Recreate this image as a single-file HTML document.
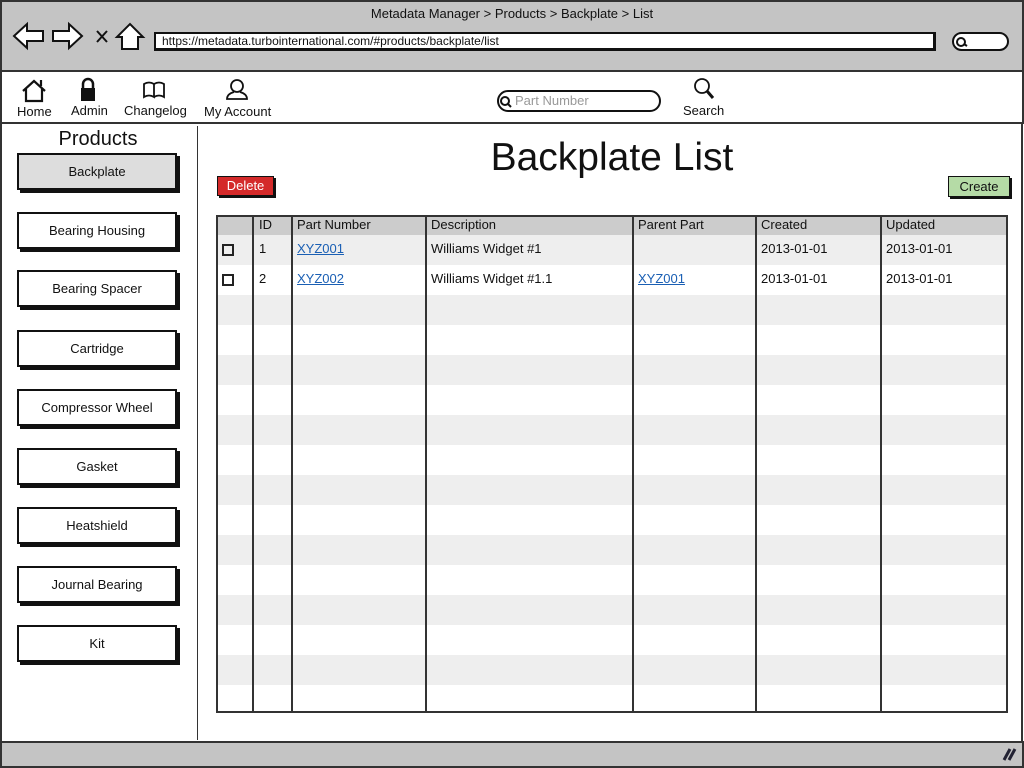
<!DOCTYPE html>
<html><head><meta charset="utf-8"><style>
*{margin:0;padding:0;box-sizing:border-box}
body{width:1024px;height:768px;position:relative;background:#fff;font-family:"Liberation Sans",sans-serif;color:#111;overflow:hidden;font-size:13px}
.a{position:absolute}
.btn{position:absolute;left:17px;width:160px;height:37px;border:2px solid #111;background:#fff;box-shadow:3px 3px 0 #111;text-align:center;line-height:33px;font-size:13px}
.t{position:absolute;font-size:13px}
.lnk{color:#1a5fb4;text-decoration:underline}
.vl{position:absolute;top:216px;width:2px;height:496px;background:#333}
</style></head><body>
<!-- browser chrome -->
<div class="a" style="left:0;top:0;width:1024px;height:72px;background:#c4c4c4;border:2px solid #333"></div>
<div class="a" style="left:0;top:6px;width:1024px;text-align:center;font-size:13px">Metadata Manager &gt; Products &gt; Backplate &gt; List</div>
<svg class="a" style="left:10px;top:21px" width="140" height="32" viewBox="0 0 140 32">
<path d="M4 15 L17 3 V10 H33 V20 H17 V27 Z" fill="#fff" stroke="#111" stroke-width="2"/>
<path d="M72 15 L59 3 V10 H43 V20 H59 V27 Z" fill="#fff" stroke="#111" stroke-width="2"/>
<path d="M87 10 L97 21 M97 10 L87 21" stroke="#111" stroke-width="2"/>
<path d="M107 16 L120 3 L133 16 H128 V28 H112 V16 Z" fill="#fff" stroke="#111" stroke-width="2"/>
</svg>
<div class="a" style="left:154px;top:32px;width:782px;height:19px;background:#fff;border:2px solid #111;border-right-width:3px;border-bottom-width:3px;font-size:12px;padding-left:6px;line-height:14px">https://metadata.turbointernational.com/#products/backplate/list</div>
<div class="a" style="left:952px;top:32px;width:57px;height:19px;background:#fff;border:2px solid #111;border-radius:10px"></div>
<svg class="a" style="left:955px;top:36px" width="14" height="12"><circle cx="6" cy="6" r="4" fill="none" stroke="#111" stroke-width="2"/><path d="M9 8 L12 10" stroke="#111" stroke-width="2"/></svg>
<!-- nav -->
<div class="a" style="left:0;top:72px;width:1024px;height:52px;border-left:2px solid #333;border-right:2px solid #333;border-bottom:2px solid #333"></div>
<svg class="a" style="left:21px;top:78px" width="28" height="26"><path d="M2 13 L13 3 L24 13 M5 11 V23 H21 V11 M20 8 V2" fill="none" stroke="#111" stroke-width="2.2"/></svg>
<svg class="a" style="left:78px;top:77px" width="20" height="26"><path d="M5 11 V7 A5 5 0 0 1 15 7 V11" fill="none" stroke="#111" stroke-width="2.5"/><rect x="3" y="11" width="14" height="13" fill="#111"/></svg>
<svg class="a" style="left:142px;top:80px" width="26" height="20"><path d="M2 4 Q7 1 12 4 V17 Q7 14 2 17 Z M12 4 Q17 1 22 4 V17 Q17 14 12 17" fill="none" stroke="#111" stroke-width="1.8"/></svg>
<svg class="a" style="left:224px;top:78px" width="26" height="24"><circle cx="13" cy="8" r="6" fill="none" stroke="#111" stroke-width="1.8"/><path d="M10 14 Q3 16 3 21 H23 Q23 16 16 14" fill="none" stroke="#111" stroke-width="1.8"/></svg>
<div class="t" style="left:17px;top:104px">Home</div>
<div class="t" style="left:71px;top:103px">Admin</div>
<div class="t" style="left:124px;top:103px">Changelog</div>
<div class="t" style="left:204px;top:104px">My Account</div>
<div class="a" style="left:497px;top:90px;width:164px;height:22px;border:2px solid #111;border-radius:11px;font-size:13px;color:#999;padding-left:16px;line-height:18px">Part Number</div>
<svg class="a" style="left:499px;top:95px" width="14" height="14"><circle cx="6" cy="6" r="4" fill="none" stroke="#111" stroke-width="2"/><path d="M9 9 L12 12" stroke="#111" stroke-width="2"/></svg>
<svg class="a" style="left:692px;top:77px" width="24" height="26"><circle cx="10" cy="9" r="7" fill="none" stroke="#111" stroke-width="1.8"/><path d="M15 14 L21 21" stroke="#111" stroke-width="3"/></svg>
<div class="t" style="left:683px;top:103px">Search</div>
<!-- body borders -->
<div class="a" style="left:0;top:124px;width:2px;height:620px;background:#333"></div>
<div class="a" style="left:1021px;top:124px;width:2px;height:620px;background:#333"></div>
<div class="a" style="left:197px;top:126px;width:1px;height:614px;background:#333"></div>
<!-- sidebar -->
<div class="a" style="left:0;top:128px;width:196px;text-align:center;font-size:20px">Products</div>
<div class="btn" style="top:153px;background:#ddd">Backplate</div>
<div class="btn" style="top:212px">Bearing Housing</div>
<div class="btn" style="top:270px">Bearing Spacer</div>
<div class="btn" style="top:330px">Cartridge</div>
<div class="btn" style="top:389px">Compressor Wheel</div>
<div class="btn" style="top:448px">Gasket</div>
<div class="btn" style="top:507px">Heatshield</div>
<div class="btn" style="top:566px">Journal Bearing</div>
<div class="btn" style="top:625px">Kit</div>
<!-- main -->
<div class="a" style="left:400px;top:136px;width:424px;text-align:center;font-size:39px">Backplate List</div>
<div class="a" style="left:217px;top:176px;width:57px;height:20px;background:#d42a2a;color:#fff;border:1px solid #111;box-shadow:2px 2px 0 #111;text-align:center;line-height:18px">Delete</div>
<div class="a" style="left:948px;top:176px;width:62px;height:21px;background:#b5dba6;border:1px solid #111;box-shadow:2px 2px 0 #111;text-align:center;line-height:19px">Create</div>
<!-- table -->
<div class="a" style="left:216px;top:215px;width:792px;height:498px;border:2px solid #333;background:repeating-linear-gradient(#eee 0 30px,#fff 30px 60px);background-position:0 18px"></div>
<div class="a" style="left:218px;top:217px;width:788px;height:18px;background:#ccc"></div>
<div class="vl" style="left:252px"></div>
<div class="vl" style="left:291px"></div>
<div class="vl" style="left:425px"></div>
<div class="vl" style="left:632px"></div>
<div class="vl" style="left:755px"></div>
<div class="vl" style="left:880px"></div>
<div class="t" style="left:259px;top:217px">ID</div>
<div class="t" style="left:297px;top:217px">Part Number</div>
<div class="t" style="left:431px;top:217px">Description</div>
<div class="t" style="left:638px;top:217px">Parent Part</div>
<div class="t" style="left:761px;top:217px">Created</div>
<div class="t" style="left:886px;top:217px">Updated</div>
<div class="a" style="left:222px;top:244px;width:12px;height:12px;border:2px solid #222"></div>
<div class="a" style="left:222px;top:274px;width:12px;height:12px;border:2px solid #222"></div>
<div class="t" style="left:259px;top:241px">1</div>
<div class="t lnk" style="left:297px;top:241px">XYZ001</div>
<div class="t" style="left:431px;top:241px">Williams Widget #1</div>
<div class="t" style="left:761px;top:241px">2013-01-01</div>
<div class="t" style="left:886px;top:241px">2013-01-01</div>
<div class="t" style="left:259px;top:271px">2</div>
<div class="t lnk" style="left:297px;top:271px">XYZ002</div>
<div class="t" style="left:431px;top:271px">Williams Widget #1.1</div>
<div class="t lnk" style="left:638px;top:271px">XYZ001</div>
<div class="t" style="left:761px;top:271px">2013-01-01</div>
<div class="t" style="left:886px;top:271px">2013-01-01</div>
<!-- bottom bar -->
<div class="a" style="left:0;top:741px;width:1024px;height:27px;background:#c4c4c4;border:2px solid #333"></div>
<svg class="a" style="left:1000px;top:746px" width="18" height="16"><path d="M4 14 L10 3 M9 14 L15 3" stroke="#223" stroke-width="3"/></svg>
</body></html>
